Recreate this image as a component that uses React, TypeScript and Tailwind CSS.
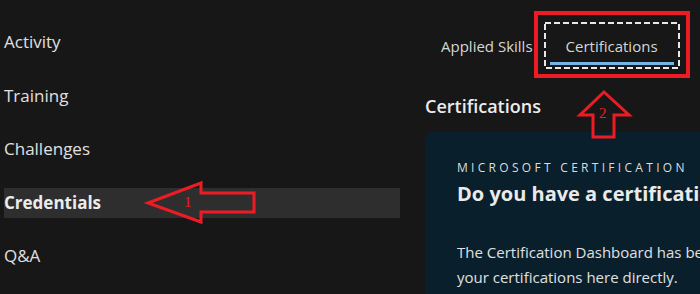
const navItems = ["Activity", "Training", "Challenges", "Credentials", "Q&A"];

export default function App() {
  return (
    <div
      className="relative flex w-[700px] h-[294px] overflow-hidden bg-[#171717] text-[#e2e2e2]"
      style={{ fontFamily: '"Open Sans", "Noto Sans", sans-serif' }}
    >
      {/* Left nav */}
      <nav className="ml-[4px] w-[396px] shrink-0 flex flex-col pt-[27px] gap-[23.5px]">
        {navItems.map((item) => {
          const active = item === "Credentials";
          return (
            <div
              key={item}
              className={
                active
                  ? "h-[30px] flex items-center bg-[#2e2e2e] text-[17px] font-bold text-[#ececec]"
                  : "h-[30px] flex items-center text-[17px] text-[#e0e0e0]"
              }
            >
              {item}
            </div>
          );
        })}
      </nav>

      {/* Main column */}
      <main className="ml-[25px] w-[560px] shrink-0 flex flex-col">
        {/* Tabs */}
        <div className="mt-[22px] flex items-center">
          <span className="pl-[16px] text-[15px] leading-[20px] text-[#d6d6d6]">Applied Skills</span>
          <button className="relative ml-[11px] w-[136px] h-[47px] flex items-center justify-center text-[15px] leading-[20px] text-[#d6d6d6]">
            <svg className="absolute inset-0" width="136" height="47">
              <rect x="1" y="1" width="134" height="45" fill="none" stroke="#e8e8e8" strokeWidth="2" strokeDasharray="6 3" />
            </svg>
            Certifications
            <span className="absolute left-[6px] right-[6px] bottom-[4px] h-[3px] bg-[#75b5e6]" />
          </button>
        </div>

        <h2 className="mt-[25px] text-[18px] leading-[24px] font-semibold text-[#ececec]">Certifications</h2>

        {/* Card */}
        <section className="mt-[14px] h-[200px] rounded-tl-lg bg-[#0a1f2c] pl-[32px] pt-[28px]">
          <p className="text-[12px] leading-[16px] tracking-[3.3px] text-[#dcdcdc]">MICROSOFT CERTIFICATION</p>
          <h3 className="mt-[5px] text-[20px] leading-[26px] font-bold text-[#eaeaea] whitespace-nowrap">
            Do you have a certification dashboard?
          </h3>
          <p className="mt-[33px] text-[15px] leading-[25px] text-[#e0e0e0] whitespace-nowrap">
            The Certification Dashboard has been retired. You can now view
            <br />
            your certifications here directly.
          </p>
        </section>
      </main>

      {/* Annotations */}
      <div className="absolute left-[534px] top-[11px] w-[156px] h-[67px] border-4 border-[#ed1c24]" />
      <svg className="absolute inset-0 pointer-events-none" width="700" height="294">
        <polygon
          points="148,203 201,183 201,193 254,193 254,212 201,212 201,222"
          fill="none"
          stroke="#ed1c24"
          strokeWidth="3"
        />
        <polygon
          points="604,92 629,115 614,115 614,137 593,137 593,115 580,115"
          fill="none"
          stroke="#ed1c24"
          strokeWidth="3"
        />
      </svg>
      <span
        className="absolute left-[184px] top-[193px] text-[15px] leading-[18px] text-[#ed1c24]"
        style={{ fontFamily: '"Liberation Serif", serif' }}
      >
        1
      </span>
      <span
        className="absolute left-[599px] top-[104px] text-[15px] leading-[18px] text-[#ed1c24]"
        style={{ fontFamily: '"Liberation Serif", serif' }}
      >
        2
      </span>
    </div>
  );
}
